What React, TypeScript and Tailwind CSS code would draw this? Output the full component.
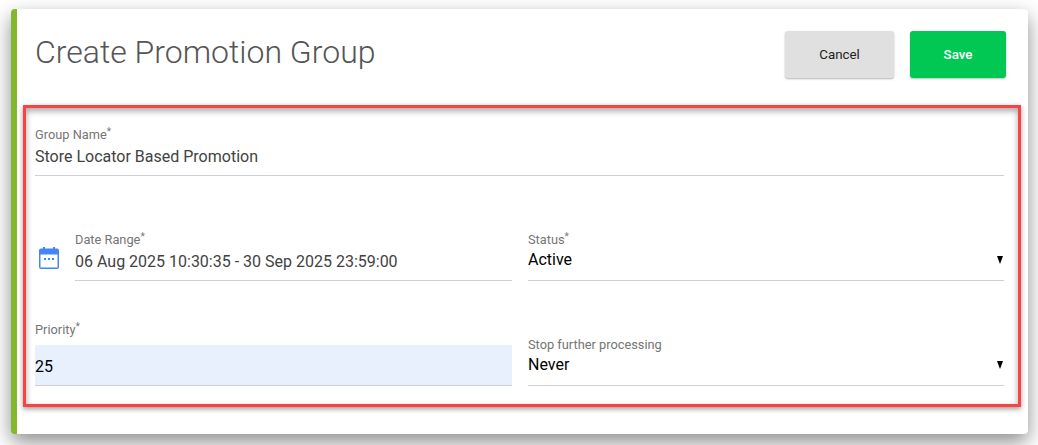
function Star() {
  return <sup className="text-[10px] leading-none top-[-4px]">*</sup>;
}

function Label({ text, required }: { text: string; required?: boolean }) {
  return (
    <div className="text-[12.8px] leading-[14px] text-[#757575] h-[14px]">
      {text}
      {required && <Star />}
    </div>
  );
}

function SelectField({ label, value, required }: { label: string; value: string; required?: boolean }) {
  return (
    <div className="h-[48px] border-b border-[#cfd0d6] flex flex-col">
      <Label text={label} required={required} />
      <div className="flex items-center justify-between pt-[2px] text-[16px] leading-[22px] text-black">
        <span>{value}</span>
        <span className="w-0 h-0 border-x-[3.5px] border-x-transparent border-t-[8px] border-t-black mr-[1px]" />
      </div>
    </div>
  );
}

function CalendarIcon() {
  return (
    <svg width="20" height="22" viewBox="0 0 20 22" className="shrink-0">
      <rect x="4" y="0" width="2" height="4" fill="#4285f4" />
      <rect x="14" y="0" width="2" height="4" fill="#4285f4" />
      <path
        d="M2 1.5h16a2 2 0 0 1 2 2v16.500a2 2 0 0 1-2 2H2a2 2 0 0 1-2-2V3.500a2 2 0 0 1 2-2Z"
        fill="#4285f4"
      />
      <rect x="1.500" y="7.500" width="17" height="13" fill="#ffffff" />
      <rect x="5" y="11" width="2" height="2" fill="#4285f4" />
      <rect x="9" y="11" width="2" height="2" fill="#4285f4" />
      <rect x="13" y="11" width="2" height="2" fill="#4285f4" />
    </svg>
  );
}

export default function App() {
  return (
    <div className="w-[1038px] h-[445px] overflow-hidden bg-white pt-[9px] pl-[11px] font-['Roboto',sans-serif]">
      <div className="w-[1017px] h-[425px] bg-white rounded-[4px] border-l-[6px] border-[#85b72e] shadow-[0_8px_20px_rgba(0,0,0,0.45)] pl-[6px] pr-[7px]">
        {/* header */}
        <div className="h-[96px] flex items-start justify-between pl-[12px] pr-[15px]">
          <h1 className="text-[32px] leading-[38px] font-light text-[#555555] pt-[24px]">
            Create Promotion Group
          </h1>
          <div className="flex gap-[16px] pt-[22px]">
            <button className="w-[109px] h-[47px] rounded-[3px] bg-[#e0e0e0] text-[13.33px] text-[#212121] shadow-[0_1px_2px_rgba(0,0,0,0.3)]">
              Cancel
            </button>
            <button className="w-[96px] h-[47px] rounded-[3px] bg-[#00c853] text-[13.33px] font-medium text-white shadow-[0_1px_2px_rgba(0,0,0,0.25)]">
              Save
            </button>
          </div>
        </div>

        {/* form */}
        <div className="w-[998px] h-[302px] border-[3px] border-[#f84343] shadow-[0_2px_5px_rgba(0,0,0,0.4),inset_0_3px_6px_rgba(0,0,0,0.35)] pl-[9px] pr-[14px] pt-[20px]">
          <div className="h-[48px] border-b border-[#cfd0d6]">
            <Label text="Group Name" required />
            <div className="text-[16px] leading-[22px] text-[#424242] pt-[4px]">
              Store Locator Based Promotion
            </div>
          </div>

          <div className="grid grid-cols-[477px_476px] gap-x-[16px] pt-[57px]">
            <div className="flex">
              <div className="w-[40px] pl-[4px] pt-[14px]">
                <CalendarIcon />
              </div>
              <div className="flex-1 h-[48px] border-b border-[#cfd0d6]">
                <Label text="Date Range" required />
                <div className="text-[16px] leading-[22px] text-[#424242] pt-[4px]">
                  06 Aug 2025 10:30:35 - 30 Sep 2025 23:59:00
                </div>
              </div>
            </div>
            <SelectField label="Status" value="Active" required />

            <div className="pt-[42px]">
              <Label text="Priority" required />
              <div className="mt-[8px] h-[41px] bg-[#e8f0fe] border-b border-[#cfd0d6] flex items-center pt-[4px] text-[16px] text-black">
                25
              </div>
            </div>
            <div className="pt-[57px]">
              <SelectField label="Stop further processing" value="Never" />
            </div>
          </div>
        </div>
      </div>
    </div>
  );
}
